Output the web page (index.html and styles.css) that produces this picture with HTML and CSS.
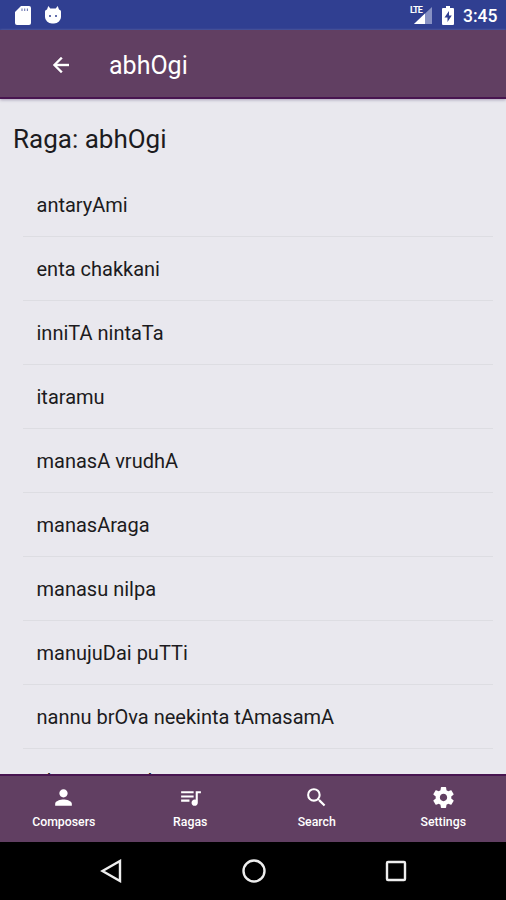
FILE: index.html
```html
<!DOCTYPE html>
<html lang="en">
<head>
<meta charset="utf-8">
<meta name="viewport" content="width=device-width">
<title>abhOgi</title>
<link rel="stylesheet" href="styles.css">
</head>
<body>
<div class="screen">
  <div class="status">
    <svg class="sd" viewBox="0 0 16 19"><path fill="#fff" d="M6 0h8a2 2 0 0 1 2 2v15a2 2 0 0 1-2 2H2a2 2 0 0 1-2-2V6z"/><path stroke="#303f91" stroke-width="1.100" opacity=".7" d="M7 2.500v2.500M9.700 2.500v2.500M12.400 2.500v2.500"/></svg>
    <svg class="droid" viewBox="0 0 16 18"><path fill="#fff" d="M0 5.500Q0 4 2 3.500L3.300 0l2 2.500h5.400l2-2.500L14 3.500Q16 4 16 5.500V11a7 6.500 0 0 1-7 6.500H7A7 6.500 0 0 1 0 11z"/><circle cx="5" cy="10" r="1" fill="#303f91"/><circle cx="11" cy="10" r="1" fill="#303f91"/></svg>
    <span class="fill"></span>
    <span class="signal"><svg viewBox="0 0 18 17"><path fill="#8791c3" d="M18 0v17H0z"/><path fill="#fff" d="M11 6.600V17H0z"/></svg><span class="lte">LTE</span></span>
    <svg class="battery" viewBox="0 0 12 19"><path fill="#fff" d="M4 0h4v2h3a1 1 0 0 1 1 1v15a1 1 0 0 1-1 1H1a1 1 0 0 1-1-1V3a1 1 0 0 1 1-1h3z"/><path fill="#303f91" d="M7 5L2.500 11.500H5.500V16L9.800 9.500H7z"/></svg>
    <span class="clock">3:45</span>
  </div>
  <header class="bar">
    <svg class="back" viewBox="4 4 16 16"><path fill="#fff" stroke="#fff" stroke-width=".4" d="M20 11H7.830l5.590-5.590L12 4l-8 8 8 8 1.410-1.410L7.830 13H20z"/></svg>
    <span class="title">abhOgi</span>
  </header>
  <main class="content">
    <h1>Raga: abhOgi</h1>
    <ul>
      <li>antaryAmi</li>
      <li>enta chakkani</li>
      <li>inniTA nintaTa</li>
      <li>itaramu</li>
      <li>manasA vrudhA</li>
      <li>manasAraga</li>
      <li>manasu nilpa</li>
      <li>manujuDai puTTi</li>
      <li>nannu brOva neekinta tAmasamA</li>
      <li>shree manada</li>
    </ul>
  </main>
  <nav class="tabs">
    <a><svg viewBox="0 0 24 24"><path d="M12 12c2.210 0 4-1.790 4-4s-1.790-4-4-4-4 1.790-4 4 1.790 4 4 4zm0 2c-2.670 0-8 1.340-8 4v2h16v-2c0-2.660-5.330-4-8-4z"/></svg><span>Composers</span></a>
    <a><svg viewBox="0 0 24 24"><path d="M15 6H3v2h12V6zm0 4H3v2h12v-2zM3 16h8v-2H3v2zM17 6v8.180c-.31-.11-.65-.18-1-.18-1.660 0-3 1.340-3 3s1.340 3 3 3 3-1.340 3-3V8h3V6h-5z"/></svg><span>Ragas</span></a>
    <a><svg viewBox="0 0 24 24"><path d="M15.500 14h-.79l-.28-.27A6.471 6.471 0 0 0 16 9.500 6.500 6.500 0 1 0 9.500 16c1.610 0 3.090-.59 4.230-1.570l.27.28v.79l5 4.990L20.490 19l-4.990-5zm-6 0C7.010 14 5 11.990 5 9.500S7.010 5 9.500 5 14 7.010 14 9.500 11.990 14 9.500 14z"/></svg><span>Search</span></a>
    <a><svg viewBox="0 0 24 24"><path d="M19.430 12.980c.04-.32.07-.64.07-.98s-.03-.66-.07-.98l2.110-1.650c.19-.15.24-.42.12-.64l-2-3.460c-.12-.22-.39-.3-.61-.22l-2.490 1c-.52-.4-1.080-.73-1.690-.98l-.38-2.650C14.460 2.180 14.250 2 14 2h-4c-.25 0-.46.18-.49.42l-.38 2.650c-.61.25-1.170.59-1.690.98l-2.490-1c-.23-.09-.49 0-.61.22l-2 3.460c-.13.22-.07.49.12.64l2.110 1.650c-.04.32-.07.65-.07.98s.03.66.07.98l-2.110 1.650c-.19.15-.24.42-.12.64l2 3.460c.12.22.39.3.61.22l2.490-1c.52.4 1.080.73 1.690.98l.38 2.650c.03.24.24.42.49.42h4c.25 0 .46-.18.49-.42l.38-2.650c.61-.25 1.170-.59 1.690-.98l2.490 1c.23.09.49 0 .61-.22l2-3.460c.12-.22.07-.49-.12-.64l-2.110-1.650zM12 15.500c-1.930 0-3.500-1.570-3.500-3.500s1.570-3.500 3.500-3.500 3.500 1.570 3.500 3.500-1.570 3.500-3.500 3.500z"/></svg><span>Settings</span></a>
  </nav>
  <div class="system">
    <svg viewBox="0 0 24 24"><path d="M20 2v20L2.500 12z"/></svg>
    <svg viewBox="0 0 24 24"><circle cx="12" cy="12" r="10.500"/></svg>
    <svg viewBox="0 0 24 24"><rect x="3" y="3" width="18" height="18" rx="1"/></svg>
  </div>
</div>
</body>
</html>
```
FILE: styles.css
```css
* { box-sizing: border-box; }
body { margin: 0; font-family: Roboto, "Liberation Sans", sans-serif; }
.screen { width: 506px; height: 900px; display: flex; flex-direction: column; overflow: hidden; background: #e9e8ee; }
.status { height: 30px; flex: none; display: flex; align-items: center; padding: 0 9px 0 15px; background: #303f91; color: #fff; }
.sd { width: 16px; height: 19px; }
.droid { width: 16px; height: 18px; margin-left: 14px; margin-top: -1px; }
.fill { flex: 1; }
.signal { position: relative; width: 22px; height: 17px; display: flex; justify-content: flex-end; }
.signal svg { width: 18px; height: 17px; }
.lte { position: absolute; left: 0; top: -2px; font-size: 9px; line-height: 10px; font-weight: 700; letter-spacing: -.9px; }
.battery { width: 12px; height: 19px; margin: 0 9px 0 10px; }
.clock { font-size: 17.500px; font-weight: 500; width: 34px; margin-top: 2px; white-space: nowrap; }
.bar { height: 69px; flex: none; display: flex; align-items: center; padding: 4px 0 0 53px; background: #613f62; border-bottom: 2px solid #481550; box-shadow: 0 1px 3px #a8a0b8; z-index: 1; color: #fff; }
.back { width: 16px; height: 16px; margin-right: 40px; margin-top: -2px; }
.title { font-size: 25px; line-height: 30px; }
.content { flex: 1; min-height: 0; overflow: hidden; color: #1c1b20; }
h1 { margin: 24px 0 18px 13px; font-size: 26px; line-height: 32px; font-weight: 400; }
ul { list-style: none; margin: 0 13px 0 23px; padding: 0; }
li { height: 64px; padding: 1px 0 0 13.500px; font-size: 20px; line-height: 63px; white-space: nowrap; border-bottom: 1px solid #dddde2; }
.tabs { height: 68px; flex: none; display: grid; grid-template-columns: repeat(4, 1fr); background: #613f62; border-top: 2px solid #481550; color: #fff; }
.tabs a { display: flex; flex-direction: column; align-items: center; padding: 9px 0 0 1px; font-size: 12.300px; line-height: 16px; font-weight: 500; }
.tabs svg { width: 25px; height: 25px; fill: #fff; margin-bottom: 4px; }
.system { height: 58px; flex: none; display: flex; align-items: center; justify-content: center; gap: 118px; padding-left: 2px; background: #000; }
.system svg { width: 24px; height: 24px; fill: none; stroke: #eee; stroke-width: 2.400; }
```
